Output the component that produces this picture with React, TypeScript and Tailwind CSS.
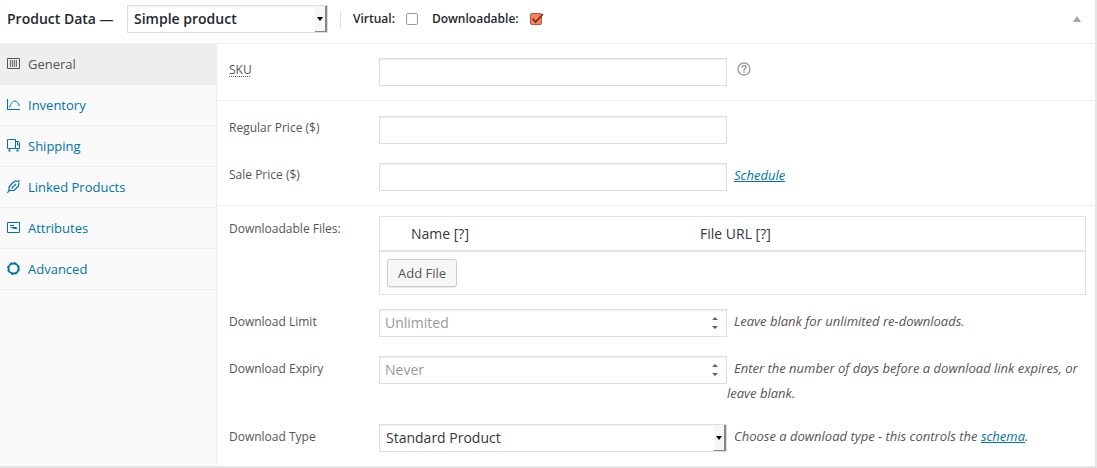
import React, { type ReactNode } from "react";

const fieldBox =
  "block h-7 border border-[#ddd] bg-white text-sm text-[#32373c] outline-none shadow-[inset_0_1px_2px_rgba(0,0,0,0.07)]";

function SelectBox({
  id,
  options,
  className,
  label,
}: {
  id: string;
  options: string[];
  className: string;
  label?: string;
}) {
  return (
    <div className={`relative h-7 ${className}`}>
      <select id={id} aria-label={label} className={`${fieldBox} w-full appearance-none pl-1.5 pr-4`}>
        {options.map((o) => (
          <option key={o}>{o}</option>
        ))}
      </select>
      <span className="pointer-events-none absolute inset-y-px right-px flex w-3 items-center justify-center border-b border-r-2 border-[#868686] bg-[#f6f6f4]">
        <svg width="6" height="4" viewBox="0 0 6 4" aria-hidden="true">
          <path d="M0 0h6L3 4z" fill="#000" />
        </svg>
      </span>
    </div>
  );
}

function NumberBox({ id, placeholder }: { id: string; placeholder: string }) {
  return (
    <div className="relative h-7 w-1/2 shrink-0">
      <input
        id={id}
        type="number"
        placeholder={placeholder}
        className={`${fieldBox} w-full px-[5px] pb-0.5 [appearance:textfield] placeholder:text-[#999] [&::-webkit-inner-spin-button]:appearance-none`}
      />
      <svg
        className="pointer-events-none absolute right-2 top-2"
        width="8"
        height="12"
        viewBox="0 0 8 12"
        fill="#5f5f5f"
        aria-hidden="true"
      >
        <path d="M4 0l3 3H1zM4 12L1 9h6z" />
      </svg>
    </div>
  );
}

function Field({ id, label, children }: { id: string; label: ReactNode; children: ReactNode }) {
  return (
    <div className="flex min-h-[29px] items-start pl-3 pr-5">
      <label htmlFor={id} className="w-[150px] shrink-0 text-[12px]">
        {label}
      </label>
      <div className="flex min-w-0 flex-1 items-start">{children}</div>
    </div>
  );
}

function Help({ children }: { children: ReactNode }) {
  return <p className="-mr-4 flex-1 indent-[7px] text-[13px] italic leading-[25px]">{children}</p>;
}

const linkClass = "text-[#0073aa] underline";

const icons = {
  general: (
    <>
      <path d="M.5 1.500h12v10H.5z" />
      <path d="M3.500 3v7M5.500 3v7M7.500 3v7M9.500 3v7" strokeWidth="1.200" opacity=".8" />
    </>
  ),
  inventory: (
    <>
      <path d="M.5 1v10.500H13" strokeWidth="1.200" />
      <path d="M2.500 9.500C4 5 6 3 8 3s3.500 2.500 4.500 5" />
    </>
  ),
  shipping: (
    <>
      <path d="M.5.500h8v9h-8zM8.500 2.500h3l1 1.500v5.500h-4" />
      <path d="M10.500 3v3h2" />
      <path d="M2.500 10.500v2M10.500 10.500v2" strokeWidth="2" />
    </>
  ),
  linked: (
    <path
      d="M.3 12.700L3 10M6 2.500L2 7v3.500M6 2.500L8.500 1 11 1.500M2 10.500h3M7 10.500L11.500 6l.5-3.500M11 1.500L12.700.3M5 10.500h2M4.500 8.500L9 4"
      strokeWidth="1.200"
    />
  ),
  attributes: (
    <>
      <path d="M.5 1.500h12v10H.5z" />
      <path d="M3 4.500h4M3.500 6.500h6M6 7.500h4" />
    </>
  ),
  advanced: (
    <>
      <circle cx="6.500" cy="6.500" r="5" strokeWidth="1.800" />
      <circle cx="6.500" cy="6.500" r="6" strokeWidth="1" strokeDasharray="2.500 2.212" />
    </>
  ),
};

const tabs: { name: string; icon: ReactNode }[] = [
  { name: "General", icon: icons.general },
  { name: "Inventory", icon: icons.inventory },
  { name: "Shipping", icon: icons.shipping },
  { name: "Linked Products", icon: icons.linked },
  { name: "Attributes", icon: icons.attributes },
  { name: "Advanced", icon: icons.advanced },
];

export default function App() {
  return (
    <section className="border-b-2 border-r-2 border-[#e5e5e5] bg-white font-['Open_Sans',sans-serif] text-[#555]">
      <header className="flex items-center border-b border-[#eee] pb-[10px] pl-[7px] pr-3.5 pt-[5px] text-[#23282d]">
        <h2 className="w-[120px] text-sm font-semibold">Product Data —</h2>
        <SelectBox
          id="product-type"
          label="Product type"
          options={["Simple product", "Grouped product", "Variable product"]}
          className="w-[201px] font-semibold [&>select]:text-[#23282d]"
        />
        <div className="ml-3 flex h-[17px] items-center gap-3.5 border-l border-[#dfdfdf] pl-3 text-xs font-semibold">
          <label className="flex items-center gap-[11px]">
            Virtual:
            <input type="checkbox" className="size-3 appearance-none rounded-[2px] border border-[#999] bg-white" />
          </label>
          <label className="flex items-center gap-[11px]">
            Downloadable:
            <span className="relative flex">
              <input
                type="checkbox"
                defaultChecked
                className="size-3 appearance-none rounded-[2px] border border-[#b5583a] bg-[#f58558]"
              />
              <svg
                className="pointer-events-none absolute left-0 top-0"
                width="14"
                height="12"
                viewBox="0 0 14 12"
                fill="none"
                aria-hidden="true"
              >
                <path d="M2.500 5.500l3 3.500L13 1" stroke="#6b2c1a" strokeWidth="1.600" />
              </svg>
            </span>
          </label>
        </div>
        <button type="button" aria-label="Toggle panel" className="ml-auto flex">
          <svg width="8" height="6" viewBox="0 0 8 6" aria-hidden="true">
            <path d="M4 0l4 6H0z" fill="#a0a5aa" />
          </svg>
        </button>
      </header>

      <div className="flex">
        <nav className="w-[217px] shrink-0 border-r border-[#eee] bg-[#fafafa]">
          <ul>
            {tabs.map((t, i) => (
              <li key={t.name} className="border-b border-[#eee]">
                <a
                  href="#"
                  className={`flex h-10 items-start gap-2 pl-[7px] pt-3 text-[13px] leading-4 ${
                    i === 0 ? "bg-[#eee] text-[#555]" : "text-[#0073aa]"
                  }`}
                >
                  <svg
                    className="mt-px"
                    width="13"
                    height="13"
                    viewBox="0 0 13 13"
                    fill="none"
                    stroke="currentColor"
                    aria-hidden="true"
                  >
                    {t.icon}
                  </svg>
                  {t.name}
                </a>
              </li>
            ))}
          </ul>
        </nav>

        <div className="min-w-0 flex-1">
          <div className="border-b border-[#eee] pb-[13px] pt-3.5 leading-6">
            <Field
              id="sku"
              label={
                <abbr title="Stock Keeping Unit" className="underline decoration-dotted decoration-1 underline-offset-2">
                  SKU
                </abbr>
              }
            >
              <input id="sku" type="text" className={`${fieldBox} w-1/2 px-[5px]`} />
              <svg className="ml-2.5 mt-1" width="14" height="14" viewBox="0 0 14 14" fill="none" stroke="#a0a0a0" aria-label="Help">
                <circle cx="7" cy="7" r="6" strokeWidth="1.400" />
                <path d="M5 5.500C5 3.300 9 3.300 9 5.500 9 7 7 6.800 7 8.500M7 9.300v1.500" strokeWidth="1.500" />
              </svg>
            </Field>
          </div>

          <div className="flex flex-col gap-[18px] border-b border-[#eee] pb-[13px] pt-[15px] leading-6">
            <Field id="regular" label="Regular Price ($)">
              <input id="regular" type="text" className={`${fieldBox} w-1/2 px-[5px]`} />
            </Field>
            <Field id="sale" label="Sale Price ($)">
              <input id="sale" type="text" className={`${fieldBox} w-1/2 px-[5px]`} />
              <Help>
                <a href="#" className={linkClass}>
                  Schedule
                </a>
              </Help>
            </Field>
          </div>

          <div className="pb-[13px] pt-2.5 leading-[25px]">
            <div className="mb-3.5 flex items-start pl-3 pr-[9px]">
              <div id="files-label" className="w-[150px] shrink-0 text-[12px]">
                Downloadable Files:
              </div>
              <table
                aria-labelledby="files-label"
                className="w-full min-w-0 flex-1 table-fixed border-separate border-spacing-0 border border-[#e1e1e1]"
              >
                <thead>
                  <tr className="text-left text-sm text-[#32373c]">
                    <th className="h-[35px] w-[289px] border-b-2 border-[#e1e1e1] p-0 pl-[31px] font-normal">Name [?]</th>
                    <th className="border-b-2 border-[#e1e1e1] p-0 pl-[31px] font-normal">File URL [?]</th>
                  </tr>
                </thead>
                <tbody>
                  <tr>
                    <td colSpan={2} className="px-[7px] py-[7px]">
                      <button
                        type="button"
                        className="block h-7 rounded-[3px] border border-[#ccc] bg-[#f7f7f7] px-2.5 text-[13px] leading-[26px] text-[#555] shadow-[0_1px_0_rgba(0,0,0,0.08)]"
                      >
                        Add File
                      </button>
                    </td>
                  </tr>
                </tbody>
              </table>
            </div>

            <div className="flex flex-col gap-[18px]">
              <Field id="limit" label="Download Limit">
                <NumberBox id="limit" placeholder="Unlimited" />
                <Help>Leave blank for unlimited re-downloads.</Help>
              </Field>
              <Field id="expiry" label="Download Expiry">
                <NumberBox id="expiry" placeholder="Never" />
                <Help>Enter the number of days before a download link expires, or leave blank.</Help>
              </Field>
              <Field id="type" label="Download Type">
                <SelectBox
                  id="type"
                  options={["Standard Product", "Application/Software", "Music"]}
                  className="w-1/2 shrink-0"
                />
                <Help>
                  Choose a download type - this controls the{" "}
                  <a href="#" className={linkClass}>
                    schema
                  </a>
                  .
                </Help>
              </Field>
            </div>
          </div>
        </div>
      </div>
    </section>
  );
}
